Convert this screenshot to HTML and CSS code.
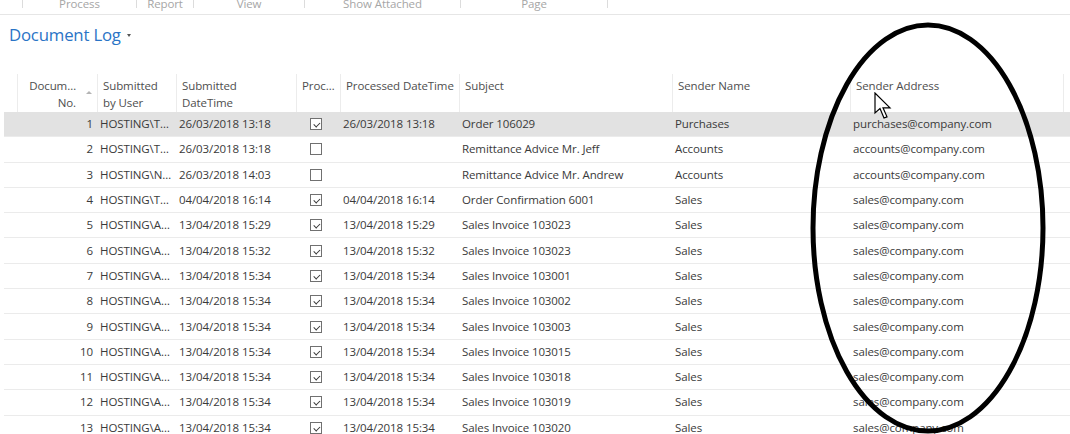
FILE: index.html
```html
<!DOCTYPE html>
<html>
<head>
<meta charset="utf-8">
<link rel="stylesheet" href="styles.css">
</head>
<body>
<div class="page">
  <div class="ribbon">
    <div class="rgroup g1"><span class="rlabel">Process</span></div>
    <div class="rgroup g2"><span class="rlabel">Report</span></div>
    <div class="rgroup g3"><span class="rlabel">View</span></div>
    <div class="rgroup g4"><span class="rlabel">Show Attached</span></div>
    <div class="rgroup g5 last"><span class="rlabel">Page</span></div>
  </div>

  <div class="title">Document Log <span class="tarrow"></span></div>

  <div class="grid">
    <div class="row head">
      <div class="c c0"></div>
      <div class="c hnum"><span class="htext">Docum…<br>No.</span><span class="sort"></span></div>
      <div class="c">Submitted<br>by User</div>
      <div class="c">Submitted<br>DateTime</div>
      <div class="c">Proc…</div>
      <div class="c">Processed DateTime</div>
      <div class="c">Subject</div>
      <div class="c">Sender Name</div>
      <div class="c">Sender Address</div>
      <div class="c"></div>
    </div>

    <div class="row sel">
      <div class="c"></div><div class="c num">1</div><div class="c">HOSTING\T…</div><div class="c">26/03/2018 13:18</div>
      <div class="c chk"><span class="box on"></span></div><div class="c">26/03/2018 13:18</div><div class="c">Order 106029</div><div class="c">Purchases</div><div class="c">purchases@company.com</div><div class="c"></div>
    </div>
    <div class="row">
      <div class="c"></div><div class="c num">2</div><div class="c">HOSTING\T…</div><div class="c">26/03/2018 13:18</div>
      <div class="c chk"><span class="box"></span></div><div class="c"></div><div class="c">Remittance Advice Mr. Jeff</div><div class="c">Accounts</div><div class="c">accounts@company.com</div><div class="c"></div>
    </div>
    <div class="row">
      <div class="c"></div><div class="c num">3</div><div class="c">HOSTING\N…</div><div class="c">26/03/2018 14:03</div>
      <div class="c chk"><span class="box"></span></div><div class="c"></div><div class="c">Remittance Advice Mr. Andrew</div><div class="c">Accounts</div><div class="c">accounts@company.com</div><div class="c"></div>
    </div>
    <div class="row">
      <div class="c"></div><div class="c num">4</div><div class="c">HOSTING\T…</div><div class="c">04/04/2018 16:14</div>
      <div class="c chk"><span class="box on"></span></div><div class="c">04/04/2018 16:14</div><div class="c">Order Confirmation 6001</div><div class="c">Sales</div><div class="c">sales@company.com</div><div class="c"></div>
    </div>
    <div class="row">
      <div class="c"></div><div class="c num">5</div><div class="c">HOSTING\A…</div><div class="c">13/04/2018 15:29</div>
      <div class="c chk"><span class="box on"></span></div><div class="c">13/04/2018 15:29</div><div class="c">Sales Invoice 103023</div><div class="c">Sales</div><div class="c">sales@company.com</div><div class="c"></div>
    </div>
    <div class="row">
      <div class="c"></div><div class="c num">6</div><div class="c">HOSTING\A…</div><div class="c">13/04/2018 15:32</div>
      <div class="c chk"><span class="box on"></span></div><div class="c">13/04/2018 15:32</div><div class="c">Sales Invoice 103023</div><div class="c">Sales</div><div class="c">sales@company.com</div><div class="c"></div>
    </div>
    <div class="row">
      <div class="c"></div><div class="c num">7</div><div class="c">HOSTING\A…</div><div class="c">13/04/2018 15:34</div>
      <div class="c chk"><span class="box on"></span></div><div class="c">13/04/2018 15:34</div><div class="c">Sales Invoice 103001</div><div class="c">Sales</div><div class="c">sales@company.com</div><div class="c"></div>
    </div>
    <div class="row">
      <div class="c"></div><div class="c num">8</div><div class="c">HOSTING\A…</div><div class="c">13/04/2018 15:34</div>
      <div class="c chk"><span class="box on"></span></div><div class="c">13/04/2018 15:34</div><div class="c">Sales Invoice 103002</div><div class="c">Sales</div><div class="c">sales@company.com</div><div class="c"></div>
    </div>
    <div class="row">
      <div class="c"></div><div class="c num">9</div><div class="c">HOSTING\A…</div><div class="c">13/04/2018 15:34</div>
      <div class="c chk"><span class="box on"></span></div><div class="c">13/04/2018 15:34</div><div class="c">Sales Invoice 103003</div><div class="c">Sales</div><div class="c">sales@company.com</div><div class="c"></div>
    </div>
    <div class="row">
      <div class="c"></div><div class="c num">10</div><div class="c">HOSTING\A…</div><div class="c">13/04/2018 15:34</div>
      <div class="c chk"><span class="box on"></span></div><div class="c">13/04/2018 15:34</div><div class="c">Sales Invoice 103015</div><div class="c">Sales</div><div class="c">sales@company.com</div><div class="c"></div>
    </div>
    <div class="row">
      <div class="c"></div><div class="c num">11</div><div class="c">HOSTING\A…</div><div class="c">13/04/2018 15:34</div>
      <div class="c chk"><span class="box on"></span></div><div class="c">13/04/2018 15:34</div><div class="c">Sales Invoice 103018</div><div class="c">Sales</div><div class="c">sales@company.com</div><div class="c"></div>
    </div>
    <div class="row">
      <div class="c"></div><div class="c num">12</div><div class="c">HOSTING\A…</div><div class="c">13/04/2018 15:34</div>
      <div class="c chk"><span class="box on"></span></div><div class="c">13/04/2018 15:34</div><div class="c">Sales Invoice 103019</div><div class="c">Sales</div><div class="c">sales@company.com</div><div class="c"></div>
    </div>
    <div class="row">
      <div class="c"></div><div class="c num">13</div><div class="c">HOSTING\A…</div><div class="c">13/04/2018 15:34</div>
      <div class="c chk"><span class="box on"></span></div><div class="c">13/04/2018 15:34</div><div class="c">Sales Invoice 103020</div><div class="c">Sales</div><div class="c">sales@company.com</div><div class="c"></div>
    </div>
  </div>

  <svg class="annot" width="1070" height="434" viewBox="0 0 1070 434">
    <ellipse cx="928" cy="228" rx="115" ry="203" fill="none" stroke="#000" stroke-width="5"/>
  </svg>
  <svg class="cursor" width="18" height="28" viewBox="0 0 18 28">
    <path d="M1 1 L1 21 L6 16.5 L10 26 L13 24.8 L9 15.8 L16 15.8 Z" fill="#fff" stroke="#000" stroke-width="1.2" stroke-linejoin="miter"/>
  </svg>
</div>
</body>
</html>
```
FILE: styles.css
```css
html, body {
  margin: 0;
  padding: 0;
  background: #fff;
  overflow: hidden;
}
.page {
  position: relative;
  width: 1070px;
  height: 434px;
  overflow: hidden;
  font-family: "Open Sans", "Noto Sans", sans-serif;
  font-size: 11.5px;
  letter-spacing: -0.1px;
  color: #3a3a3a;
}
.ribbon {
  display: flex;
  height: 14px;
  padding-left: 22px;
  border-bottom: 1px solid #e6e6e6;
}
.rgroup {
  height: 8px;
  border-left: 1px solid #dcdcdc;
  display: flex;
  justify-content: center;
  box-sizing: border-box;
}
.rgroup.last { border-right: 1px solid #dcdcdc; }
.g1 { width: 114px; }
.g2 { width: 57px; }
.g3 { width: 111px; }
.g4 { width: 156px; }
.g5 { width: 148px; }
.rlabel {
  display: block;
  line-height: 12px;
  margin-top: -2px;
  font-size: 11.5px;
  color: #a6a6a6;
  white-space: nowrap;
}
.title {
  margin: 10px 0 0 9px;
  height: 20px;
  line-height: 20px;
  font-size: 16.8px;
  letter-spacing: -0.2px;
  color: #2a74c6;
  display: flex;
  align-items: center;
  gap: 6px;
}
.tarrow {
  width: 0;
  height: 0;
  border-left: 2.5px solid transparent;
  border-right: 2.5px solid transparent;
  border-top: 3px solid #555;
  margin-top: 1px;
}
.grid {
  margin-top: 29px;
  margin-left: 4px;
}
.row {
  display: grid;
  grid-template-columns: 13px 80px 79px 120px 44px 119px 213px 178px 213px 7px;
  height: 25.3px;
  box-sizing: border-box;
  border-bottom: 1px solid #ebebeb;
  align-items: center;
}
.row .c {
  padding-left: 3px;
  white-space: nowrap;
  overflow: hidden;
  line-height: 16px;
}
.row .num {
  text-align: right;
  padding-right: 4px;
  padding-left: 0;
}
.row.sel { background: #e2e2e2; }
.row.head {
  height: 38px;
  border-bottom: none;
  align-items: stretch;
  color: #4e4e4e;
}
.row.head .c {
  border-left: 1px solid #ececec;
  padding: 4px 0 0 5px;
  line-height: 16.5px;
}
.row.head .c0 { border-left: none; }
.row.head .hnum {
  display: flex;
  justify-content: flex-end;
  padding: 4px 0 0 0;
}
.htext { text-align: right; }
.sort {
  width: 0;
  height: 0;
  border-left: 3px solid transparent;
  border-right: 3px solid transparent;
  border-bottom: 3px solid #b4b4b4;
  margin: 13px 5px 0 10px;
}
.chk { padding-left: 14px !important; display: flex; }
.box {
  display: block;
  width: 12px;
  height: 12px;
  box-sizing: border-box;
  border: 1px solid #707070;
  background: #fff;
  position: relative;
}
.box.on::after {
  content: "";
  position: absolute;
  left: 2px;
  top: 1px;
  width: 5px;
  height: 2.5px;
  border-left: 1.2px solid #333;
  border-bottom: 1.2px solid #333;
  transform: rotate(-45deg) translate(-1px, 2px);
}
.annot {
  position: absolute;
  left: 0;
  top: 0;
  pointer-events: none;
}
.cursor {
  position: absolute;
  left: 874px;
  top: 92px;
  pointer-events: none;
}
```
